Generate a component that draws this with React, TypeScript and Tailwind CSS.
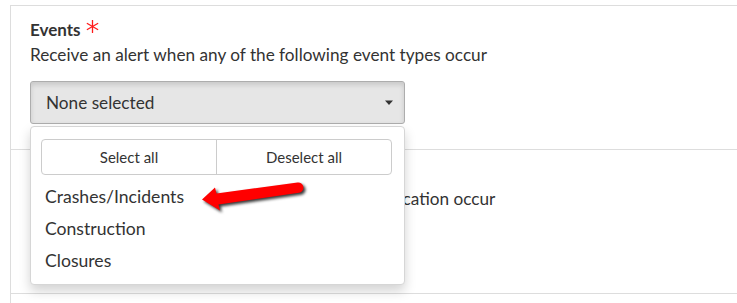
import React from "react";

const font = { fontFamily: "Lato, 'Open Sans', sans-serif" };

function Asterisk() {
  return (
    <svg width="13" height="13" viewBox="0 0 13 13" className="inline-block align-top ml-[5px] mt-[1px]">
      <g stroke="#ff1a1a" strokeWidth="1.3" strokeLinecap="round">
        <line x1="6.5" y1="0.5" x2="6.5" y2="12.5" />
        <line x1="1.3" y1="3.5" x2="11.7" y2="9.5" />
        <line x1="1.3" y1="9.5" x2="11.7" y2="3.5" />
      </g>
    </svg>
  );
}

function Caret() {
  return (
    <svg width="10" height="6" viewBox="0 0 10 6">
      <path d="M1 0.5 L9 0.5 L5 5 Z" fill="#333" />
    </svg>
  );
}

function Section({
  subtitle,
  active,
}: {
  subtitle: string;
  active?: boolean;
}) {
  return (
    <div className="border-t border-[#dddddd] pt-[13px] pb-[25px] px-[19px]">
      <div className="leading-[22px] text-[17px] font-bold text-[#333]">
        Events
        <Asterisk />
      </div>
      <div className="leading-[22px] text-[17.2px] text-[#333] mt-[3px]">{subtitle}</div>
      <div
        className={
          "mt-[15px] h-[43px] w-[375px] rounded-[3px] border flex items-center justify-between pl-[15px] pr-[10px] text-[17.2px] text-[#333] " +
          (active
            ? "bg-[#e6e6e6] border-[#adadad] shadow-[inset_0_3px_5px_rgba(0,0,0,0.125)]"
            : "bg-white border-[#cccccc]")
        }
      >
        <span>None selected</span>
        <Caret />
      </div>
    </div>
  );
}

function Arrow() {
  return (
    <svg
      width="120"
      height="42"
      viewBox="0 0 120 42"
      className="absolute left-[190px] top-[175px]"
      style={{ filter: "drop-shadow(2px 2.5px 1.5px rgba(0,0,0,0.8))" }}
    >
      <path
        d="M12 24.5 L25 12.5 L26.5 18.5 L107.5 7.5 A5.2 5.2 0 0 1 109 17.8 L28.5 29.5 L30 35.5 Z"
        fill="#ff0000"
        strokeLinejoin="round"
      />
    </svg>
  );
}

export default function App() {
  return (
    <div className="relative w-[737px] h-[303px] overflow-hidden bg-white" style={font}>
      <div className="ml-[10px] mt-[5px] border-l border-[#dddddd] h-[298px]">
        <Section subtitle="Receive an alert when any of the following event types occur" active />
        <Section subtitle="Receive an alert when any of the following classification occur" />
        <div className="border-t border-[#dddddd]" />
      </div>

      <div className="absolute left-[30px] top-[126px] w-[375px] h-[159px] bg-white border border-[#d6d6d6] rounded-[4px] shadow-[0_6px_12px_rgba(0,0,0,0.175)] pt-[12px] px-[10px]">
        <div className="flex w-[351px] h-[36px] border border-[#cccccc] rounded-[4px] text-[15px] text-[#333]">
          <div className="w-[175px] flex items-center justify-center border-r border-[#cccccc]">Select all</div>
          <div className="flex-1 flex items-center justify-center">Deselect all</div>
        </div>
        <div className="mt-[6px] -mx-[10px] text-[17.6px] text-[#333]">
          <div className="h-[32px] leading-[32px] pl-[14px]">Crashes/Incidents</div>
          <div className="h-[32px] leading-[32px] pl-[14px]">Construction</div>
          <div className="h-[32px] leading-[32px] pl-[14px]">Closures</div>
        </div>
      </div>

      <Arrow />
    </div>
  );
}
